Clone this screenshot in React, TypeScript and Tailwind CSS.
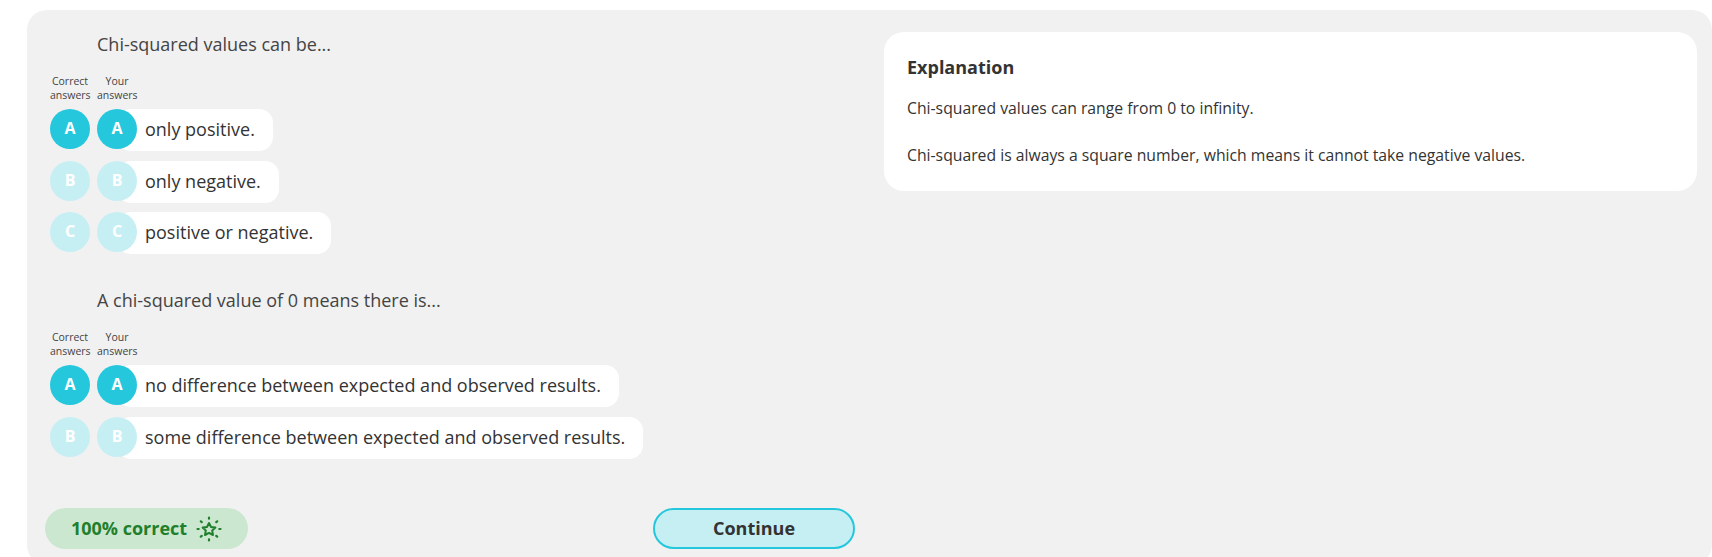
const questions = [
  {
    title: "Chi-squared values can be...",
    options: [
      { letter: "A", text: "only positive.", on: true },
      { letter: "B", text: "only negative.", on: false },
      { letter: "C", text: "positive or negative.", on: false },
    ],
  },
  {
    title: "A chi-squared value of 0 means there is...",
    options: [
      { letter: "A", text: "no difference between expected and observed results.", on: true },
      { letter: "B", text: "some difference between expected and observed results.", on: false },
    ],
  },
];

function Bubble({ letter, on }: { letter: string; on: boolean }) {
  return (
    <span
      className={`relative z-10 flex h-10 w-10 shrink-0 items-center justify-center rounded-full pb-[2px] text-[16px] font-bold text-white ${
        on ? "bg-[#25c7dc]" : "bg-[#c6eff4]"
      }`}
    >
      {letter}
    </span>
  );
}

function StarBurst() {
  return (
    <svg width="26" height="26" viewBox="0 0 26 26" fill="none" stroke="#1f7f2c" strokeLinecap="round">
      <path
        d="M13 7l2 4 4.4.6-3.2 3 .8 4.4-4-2.1-4 2.1.8-4.4-3.2-3 4.4-.6z"
        strokeWidth="2"
        strokeLinejoin="round"
      />
      <path
        d="M13 1.5v1.2M13 23.3v1.2M1.5 13h1.2M23.3 13h1.2M4.8 5.3l1 .8M20.2 19.9l1 .8M21.2 5.3l-1 .8M5.8 19.9l-1 .8"
        strokeWidth="2.2"
      />
    </svg>
  );
}

function Question({ title, options }: (typeof questions)[number]) {
  return (
    <div>
      <p className="pl-[47px] text-[18px] leading-[24px] text-[#444]">{title}</p>
      <div className="mt-[18px] flex gap-[7px] text-center text-[10.5px] leading-[14px] text-[#444]">
        <span className="w-10 whitespace-pre-line">{"Correct\nanswers"}</span>
        <span className="w-10 whitespace-pre-line">{"Your\nanswers"}</span>
      </div>
      <ul className="mt-[7px] space-y-[9.5px]">
        {options.map((o) => (
          <li key={o.letter} className="flex items-start">
            <Bubble letter={o.letter} on={o.on} />
            <span className="ml-[7px]">
              <Bubble letter={o.letter} on={o.on} />
            </span>
            <span className="-ml-5 rounded-[14px] bg-white pb-[9px] pl-[28px] pr-[18px] pt-[7px] text-[18px] leading-[26px] text-[#333]">
              {o.text}
            </span>
          </li>
        ))}
      </ul>
    </div>
  );
}

export default function App() {
  return (
    <div className="h-[557px] overflow-hidden bg-white pl-[27px] pt-[10px] font-['Open_Sans',sans-serif]">
      <div className="flex h-[555px] rounded-[20px] bg-[#f1f1f1]">
        <div className="flex w-[828px] shrink-0 flex-col pl-[18px] pt-[22px]">
          <div className="space-y-[34px] pl-[5px]">
            {questions.map((q) => (
              <Question key={q.title} title={q.title} options={q.options} />
            ))}
          </div>
          <div className="mt-auto mb-[16px] flex items-center justify-between">
            <div className="flex h-[41px] w-[203px] items-center justify-center gap-[9px] rounded-full bg-[#cce7cf] text-[18px] font-bold text-[#1f7f2c]">
              100% correct
              <StarBurst />
            </div>
            <button
              type="button"
              className="h-[41px] w-[202px] rounded-full border-2 border-[#25c7dc] bg-[#c6eff4] text-[18px] font-bold text-[#333]"
            >
              Continue
            </button>
          </div>
        </div>
        <div className="mt-[22px] ml-[29px] h-[159px] w-[813px] rounded-[20px] bg-white px-[23px] pt-[23px] text-[#333]">
          <h2 className="text-[18px] font-bold leading-[24px]">Explanation</h2>
          <p className="mt-[18px] text-[15.75px] leading-[22px]">Chi-squared values can range from 0 to infinity.</p>
          <p className="mt-[25px] text-[15.75px] leading-[22px]">
            Chi-squared is always a square number, which means it cannot take negative values.
          </p>
        </div>
      </div>
    </div>
  );
}
